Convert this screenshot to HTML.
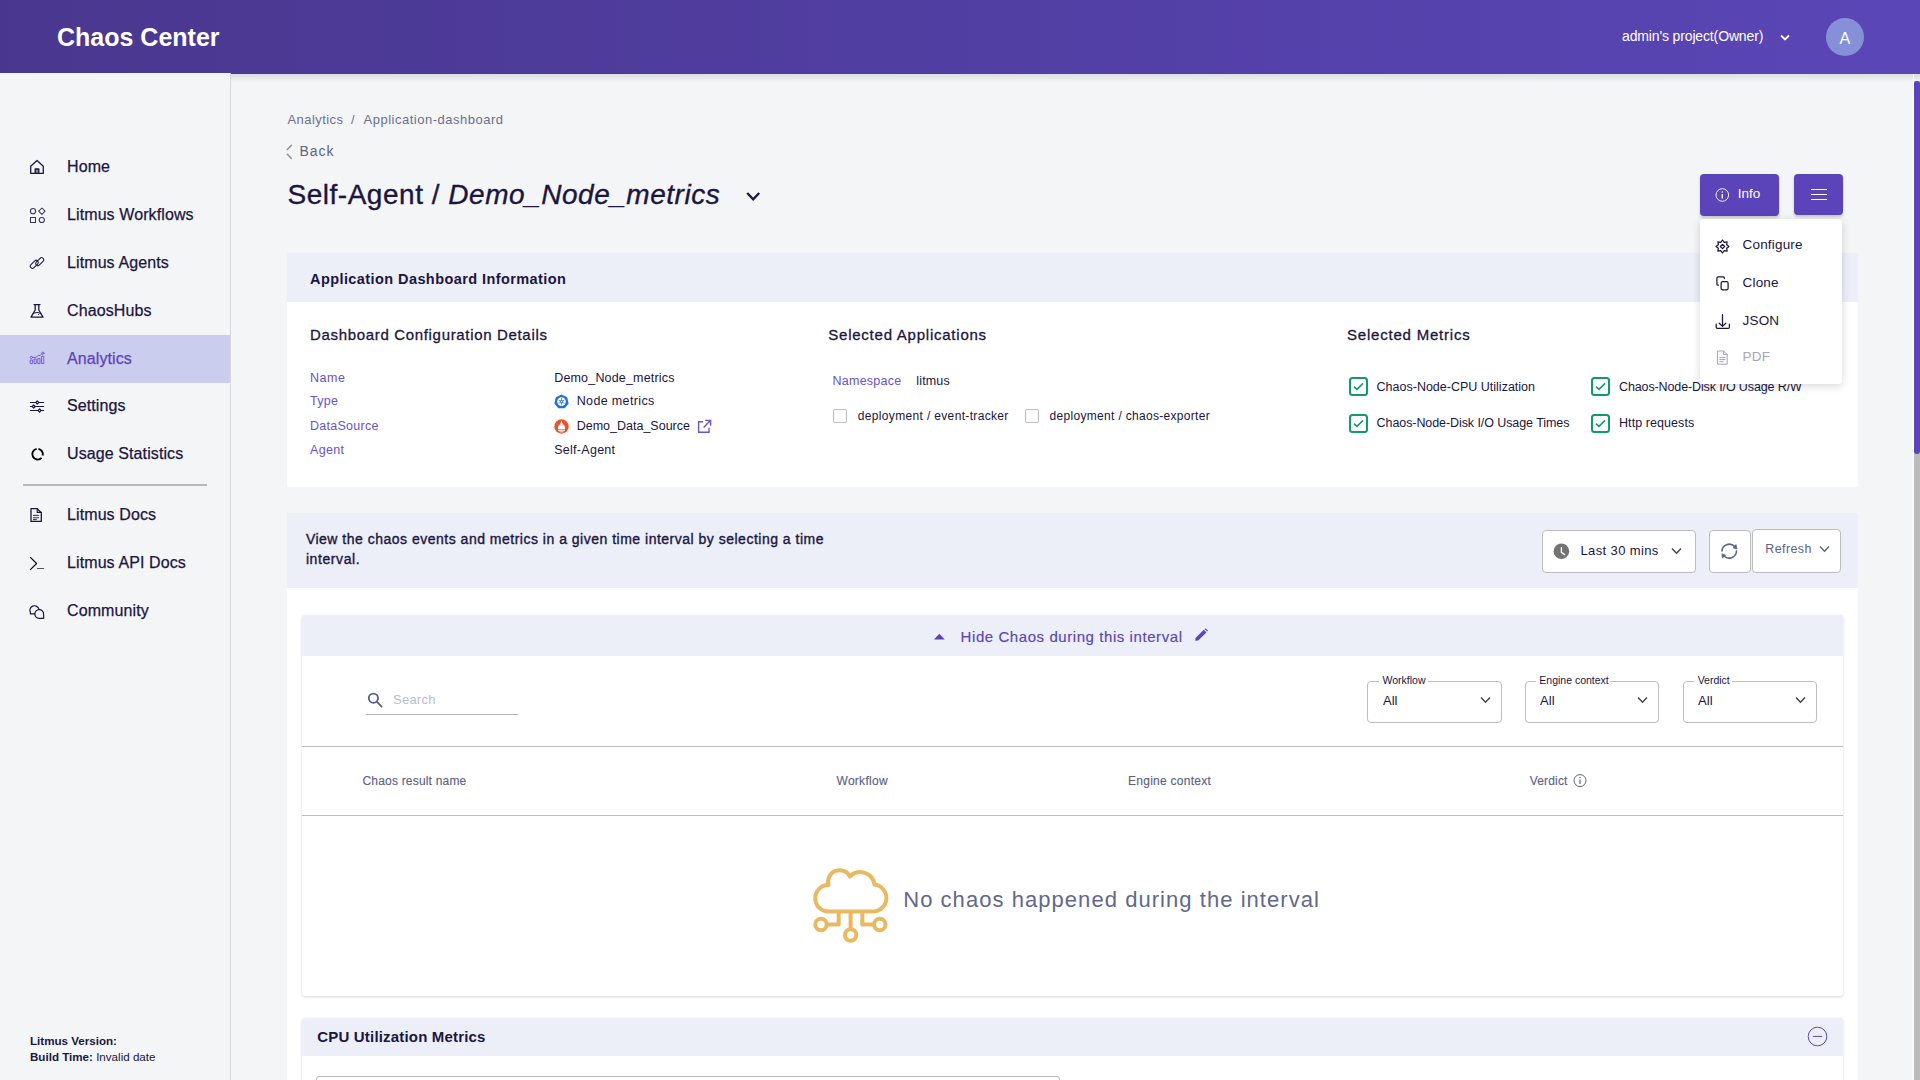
<!DOCTYPE html>
<html><head><meta charset="utf-8">
<style>
*{box-sizing:border-box;margin:0;padding:0}
html,body{width:1920px;height:1080px;overflow:hidden;background:#f4f5f7;font-family:"Liberation Sans",sans-serif;color:#1b1540}
.abs{position:absolute}
.t{position:absolute;white-space:nowrap;line-height:1}
#hdr{position:absolute;left:0;top:0;width:1920px;height:74px;background:linear-gradient(90deg,#49378f 0%,#5a46b6 100%)}
#side{position:absolute;left:0;top:73px;width:231px;height:1007px;background:#f4f5f7;border-right:1px solid #d7d8dc}
#shadow{position:absolute;left:231px;top:74px;width:1689px;height:8px;background:linear-gradient(180deg,rgba(0,0,0,0.10),rgba(0,0,0,0))}
.nav{position:absolute;left:0;width:230px;height:47px}
.nav .lbl{position:absolute;left:67px;top:16px;font-size:16px;line-height:1;white-space:nowrap;color:#1b1540}
.nl{left:67px;font-size:16px;letter-spacing:0.1px;color:#1b1540;-webkit-text-stroke:0.25px currentColor}
</style></head>
<body>
<div class="t" style="left:287.5px;top:113.0px;font-size:13.0px;color:#6b6f8e;letter-spacing:0.44px">Analytics</div>
<div class="t" style="left:351.0px;top:113.0px;font-size:13.0px;color:#6b6f8e">/</div>
<div class="t" style="left:363.5px;top:113.0px;font-size:13.0px;color:#6b6f8e;letter-spacing:0.51px">Application-dashboard</div>
<svg class="abs" style="left:282px;top:140px" width="20" height="22" viewBox="282 140 20 22"><path d="M291.4 145.2 L287.3 149.4 M287.3 154.3 L291.4 158.5" stroke="#8f8f92" stroke-width="1.5" fill="none" stroke-linecap="round"/></svg><div class="t" style="left:299.4px;top:144.1px;font-size:14.0px;color:#5d6386;letter-spacing:1.00px">Back</div>
<div class="t" style="left:287.5px;top:180.7px;font-size:28.0px;color:#1b1540;-webkit-text-stroke:0.35px #1b1540;letter-spacing:0.52px">Self-Agent / <i>Demo_Node_metrics</i></div>
<svg class="abs" style="left:744px;top:189px" width="18" height="14" viewBox="0 0 18 14"><path d="M3.2 4 L9.2 10.4 L15.2 4" stroke="#1b1540" stroke-width="2.3" fill="none"/></svg>
<div class="abs" style="left:1700.0px;top:174.0px;width:79.0px;height:42.0px;background:#5b44ba;border-radius:4px;box-shadow:0 2px 3px rgba(0,0,0,0.18)"></div>
<svg class="abs" style="left:1714px;top:187px" width="16" height="16" viewBox="0 0 16 16" fill="none" stroke="#fff" stroke-width="0.9"><circle cx="8.3" cy="8" r="6.3"/><path d="M8.3 7 V11.5" stroke-width="1.3"/><circle cx="8.3" cy="5" r="0.7" fill="#fff" stroke="none"/></svg>
<div class="t" style="left:1737.8px;top:186.6px;font-size:13.5px;color:#fff">Info</div>
<div class="abs" style="left:1794.0px;top:174.0px;width:49.0px;height:41.0px;background:#5b44ba;border-radius:4px;box-shadow:0 2px 3px rgba(0,0,0,0.18)"></div>
<div class="abs" style="left:1810.5px;top:188.5px;width:16.0px;height:1.7px;background:#fff"></div>
<div class="abs" style="left:1810.5px;top:193.8px;width:16.0px;height:1.7px;background:#fff"></div>
<div class="abs" style="left:1810.5px;top:198.8px;width:16.0px;height:1.7px;background:#fff"></div>
<div class="abs" style="left:287.0px;top:253.0px;width:1571.0px;height:234.0px;background:#fff"></div>
<div class="abs" style="left:287.0px;top:253.0px;width:1571.0px;height:49.0px;background:#eceff8"></div>
<div class="t" style="left:310.0px;top:271.5px;font-size:14.5px;font-weight:bold;color:#1b1540;letter-spacing:0.42px">Application Dashboard Information</div>
<div class="t" style="left:310.0px;top:327.3px;font-size:15.0px;color:#1b1540;-webkit-text-stroke:0.3px #1b1540;letter-spacing:0.67px">Dashboard Configuration Details</div>
<div class="t" style="left:310.0px;top:371.5px;font-size:12.5px;color:#6a52c8;letter-spacing:0.50px">Name</div>
<div class="t" style="left:310.0px;top:395.3px;font-size:12.5px;color:#6a52c8;letter-spacing:0.30px">Type</div>
<div class="t" style="left:310.0px;top:419.6px;font-size:12.5px;color:#6a52c8;letter-spacing:0.27px">DataSource</div>
<div class="t" style="left:310.0px;top:443.7px;font-size:12.5px;color:#6a52c8;letter-spacing:0.30px">Agent</div>
<div class="t" style="left:554.2px;top:371.5px;font-size:12.5px;color:#1b1540;letter-spacing:0.18px">Demo_Node_metrics</div>
<div class="t" style="left:576.7px;top:395.3px;font-size:12.5px;color:#1b1540;letter-spacing:0.36px">Node metrics</div>
<div class="t" style="left:576.7px;top:419.6px;font-size:12.5px;color:#1b1540">Demo_Data_Source</div>
<div class="t" style="left:554.2px;top:443.7px;font-size:12.5px;color:#1b1540;letter-spacing:0.28px">Self-Agent</div>
<svg class="abs" style="left:554px;top:394px" width="15" height="15" viewBox="0 0 15 15"><path d="M7.5 0.6 L13.2 3.3 L14.6 9.4 L10.7 14.3 H4.3 L0.4 9.4 L1.8 3.3 Z" fill="#1f6fe6"/><circle cx="7.5" cy="7.6" r="4.3" fill="#fff"/><path d="M7.5 4 V11.2 M4.6 6 L10.4 9.4 M10.4 6 L4.6 9.4" stroke="#1f6fe6" stroke-width="0.7"/><circle cx="7.5" cy="7.6" r="1.7" fill="#1f6fe6"/><circle cx="7.5" cy="7.6" r="0.8" fill="#fff"/></svg>
<svg class="abs" style="left:554px;top:419px" width="15" height="15" viewBox="0 0 15 15"><circle cx="7.5" cy="7.5" r="7.2" fill="#e8532d"/><path d="M4 10.2 C3.6 8 4.6 6.6 5.2 5.2 C5.6 6 5.8 6.6 6.2 6.6 C6.2 4.6 7 2.8 7.5 1.6 C8 2.8 8.8 4.6 8.8 6.6 C9.2 6.6 9.4 6 9.8 5.2 C10.4 6.6 11.4 8 11 10.2 Z" fill="#fff"/><rect x="4" y="10.9" width="7" height="0.9" fill="#fff"/><rect x="5.4" y="12.4" width="4.2" height="0.9" fill="#fff"/></svg>
<svg class="abs" style="left:697px;top:419px" width="15" height="15" viewBox="0 0 15 15" fill="none" stroke="#6a52c8" stroke-width="1.4"><path d="M6 2.8 H1.6 V13.2 H12 V8.8"/><path d="M8.2 1.4 H13.6 V6.8 M13.4 1.6 L6.6 8.4"/></svg>
<div class="t" style="left:828.3px;top:327.4px;font-size:15.0px;color:#1b1540;-webkit-text-stroke:0.3px #1b1540;letter-spacing:0.76px">Selected Applications</div>
<div class="t" style="left:832.5px;top:374.8px;font-size:12.5px;color:#6a52c8;letter-spacing:0.25px">Namespace</div>
<div class="t" style="left:916.3px;top:374.8px;font-size:12.5px;color:#1b1540;letter-spacing:0.14px">litmus</div>
<div class="abs" style="left:832.5px;top:409.0px;width:14.1px;height:14.0px;border:1.5px solid #bdbdc2;border-radius:2px"></div>
<div class="t" style="left:857.8px;top:410.3px;font-size:12.0px;color:#1b1540;letter-spacing:0.34px">deployment / event-tracker</div>
<div class="abs" style="left:1024.6px;top:409.0px;width:14.0px;height:14.0px;border:1.5px solid #bdbdc2;border-radius:2px"></div>
<div class="t" style="left:1049.6px;top:410.3px;font-size:12.0px;color:#1b1540;letter-spacing:0.31px">deployment / chaos-exporter</div>
<div class="t" style="left:1347.0px;top:327.4px;font-size:15.0px;color:#1b1540;-webkit-text-stroke:0.3px #1b1540;letter-spacing:0.79px">Selected Metrics</div>
<svg class="abs" style="left:1349.0px;top:377.0px" width="19" height="19" viewBox="0 0 19 19" fill="none"><rect x="1" y="1" width="17" height="17" rx="2.5" stroke="#109b67" stroke-width="2"/><path d="M5 9.6 L8 12.4 L14 6.4" stroke="#109b67" stroke-width="1.5"/></svg>
<div class="t" style="left:1376.6px;top:381.0px;font-size:12.5px;color:#1b1540">Chaos-Node-CPU Utilization</div>
<svg class="abs" style="left:1591.0px;top:377.0px" width="19" height="19" viewBox="0 0 19 19" fill="none"><rect x="1" y="1" width="17" height="17" rx="2.5" stroke="#109b67" stroke-width="2"/><path d="M5 9.6 L8 12.4 L14 6.4" stroke="#109b67" stroke-width="1.5"/></svg>
<div class="t" style="left:1619.0px;top:381.0px;font-size:12.5px;color:#1b1540;letter-spacing:-0.12px">Chaos-Node-Disk I/O Usage R/W</div>
<svg class="abs" style="left:1349.0px;top:413.5px" width="19" height="19" viewBox="0 0 19 19" fill="none"><rect x="1" y="1" width="17" height="17" rx="2.5" stroke="#109b67" stroke-width="2"/><path d="M5 9.6 L8 12.4 L14 6.4" stroke="#109b67" stroke-width="1.5"/></svg>
<div class="t" style="left:1376.6px;top:416.9px;font-size:12.5px;color:#1b1540;letter-spacing:-0.08px">Chaos-Node-Disk I/O Usage Times</div>
<svg class="abs" style="left:1591.0px;top:413.5px" width="19" height="19" viewBox="0 0 19 19" fill="none"><rect x="1" y="1" width="17" height="17" rx="2.5" stroke="#109b67" stroke-width="2"/><path d="M5 9.6 L8 12.4 L14 6.4" stroke="#109b67" stroke-width="1.5"/></svg>
<div class="t" style="left:1619.0px;top:416.9px;font-size:12.5px;color:#1b1540;letter-spacing:0.07px">Http requests</div>
<div class="abs" style="left:287.0px;top:513.0px;width:1571.0px;height:567.0px;background:#fff"></div>
<div class="abs" style="left:287.0px;top:513.0px;width:1571.0px;height:75.0px;background:#eceff8"></div>
<div class="t" style="left:305.9px;top:532.3px;font-size:14.0px;color:#1b1540;-webkit-text-stroke:0.35px #1b1540;letter-spacing:0.50px">View the chaos events and metrics in a given time interval by selecting a time</div>
<div class="t" style="left:305.9px;top:552.1px;font-size:14.0px;color:#1b1540;-webkit-text-stroke:0.35px #1b1540;letter-spacing:0.60px">interval.</div>
<div class="abs" style="left:1542.0px;top:530.0px;width:154.0px;height:43.0px;background:#fff;border:1px solid #bcbcbc;border-radius:4px"></div>
<svg class="abs" style="left:1550px;top:540px" width="25" height="24" viewBox="1550 540 25 24"><circle cx="1561.4" cy="551.3" r="7.8" fill="#737373"/><path d="M1561.4 547.6 V552.4 L1564.6 554.6" stroke="#fff" stroke-width="1.3" fill="none" stroke-linecap="round" stroke-linejoin="round"/></svg>
<div class="t" style="left:1580.5px;top:543.7px;font-size:13.0px;color:#1b1540;letter-spacing:0.37px">Last 30 mins</div>
<svg class="abs" style="left:1670px;top:546px" width="13" height="10" viewBox="0 0 13 10"><path d="M2 2.6 L6.5 7.2 L11 2.6" stroke="#444" stroke-width="1.5" fill="none"/></svg>
<div class="abs" style="left:1708.5px;top:530.0px;width:42.5px;height:43.0px;background:#fff;border:1px solid #bcbcbc;border-radius:4px"></div>
<svg class="abs" style="left:1715px;top:538px" width="30" height="28" viewBox="1715 538 30 28" fill="none" stroke="#5d6386" stroke-width="1.6"><path d="M1721.9 551.5 A7.4 7.4 0 0 1 1734.6 546.4"/><path d="M1736.5 550.4 A7.4 7.4 0 0 1 1724 556"/><path d="M1733 547.8 L1736 544.6 L1737 549 Z" fill="#5d6386" stroke-width="0.8" stroke-linejoin="round"/><path d="M1722 553.8 L1722.4 558 L1725.6 555.2 Z" fill="#5d6386" stroke-width="0.8" stroke-linejoin="round"/></svg>
<div class="abs" style="left:1751.5px;top:529.0px;width:89.5px;height:44.0px;background:#fff;border:1px solid #bcbcbc;border-radius:4px"></div>
<div class="t" style="left:1765.2px;top:543.2px;font-size:12.5px;color:#5d6386;letter-spacing:0.42px">Refresh</div>
<svg class="abs" style="left:1818px;top:544px" width="13" height="10" viewBox="0 0 13 10"><path d="M2 2.6 L6.5 7.2 L11 2.6" stroke="#5d6386" stroke-width="1.5" fill="none"/></svg>
<div class="abs" style="left:302.0px;top:615.0px;width:1541.0px;height:381.0px;background:#fff;border-radius:3px;box-shadow:0 1px 3px rgba(0,0,0,0.16)"></div>
<div class="abs" style="left:302.0px;top:615.0px;width:1541.0px;height:41.0px;background:#eceff8;border-radius:3px 3px 0 0"></div>
<svg class="abs" style="left:933px;top:632px" width="13" height="9" viewBox="0 0 13 9"><path d="M1 7.6 L6.4 1.8 L11.8 7.6 Z" fill="#5b44ba"/></svg>
<div class="t" style="left:960.6px;top:629.2px;font-size:15.0px;color:#5b44ba;-webkit-text-stroke:0.15px #5b44ba;letter-spacing:0.57px">Hide Chaos during this interval</div>
<svg class="abs" style="left:1194px;top:628px" width="15" height="14" viewBox="0 0 15 14"><path d="M1.2 12.8 L1.6 10 L9.8 1.8 L12.4 4.4 L4.2 12.6 Z" fill="#5b44ba"/><path d="M10.6 1 L11.6 0.2 L14 2.6 L13.2 3.6 Z" fill="#5b44ba"/></svg>
<svg class="abs" style="left:366px;top:691px" width="18" height="18" viewBox="0 0 18 18" fill="none" stroke="#5d6386" stroke-width="1.9"><circle cx="7.4" cy="7.2" r="4.6"/><path d="M10.8 10.6 L15.6 15.6" stroke-linecap="round"/></svg>
<div class="t" style="left:393.0px;top:692.9px;font-size:13.0px;color:#b9bdd0;letter-spacing:0.24px">Search</div>
<div class="abs" style="left:366.0px;top:713.5px;width:152.0px;height:1.5px;background:#b0b0b3"></div>
<div class="abs" style="left:1367.4px;top:681.0px;width:134.2px;height:42.0px;border:1px solid #bdbdc0;border-radius:4px"></div>
<div class="abs" style="left:1379.0px;top:678.0px;width:48.6px;height:6.0px;background:#fff"></div>
<div class="t" style="left:1382.5px;top:675.1px;font-size:10.5px;color:#1b1540">Workflow</div>
<div class="t" style="left:1383.0px;top:694.0px;font-size:13.0px;color:#1b1540">All</div>
<svg class="abs" style="left:1478.6px;top:695px" width="13" height="10" viewBox="0 0 13 10"><path d="M2 2.6 L6.5 7.2 L11 2.6" stroke="#444" stroke-width="1.5" fill="none"/></svg>
<div class="abs" style="left:1524.5px;top:681.0px;width:134.1px;height:42.0px;border:1px solid #bdbdc0;border-radius:4px"></div>
<div class="abs" style="left:1536.0px;top:678.0px;width:74.0px;height:6.0px;background:#fff"></div>
<div class="t" style="left:1539.3px;top:675.1px;font-size:10.5px;color:#1b1540">Engine context</div>
<div class="t" style="left:1540.1px;top:694.0px;font-size:13.0px;color:#1b1540">All</div>
<svg class="abs" style="left:1635.6px;top:695px" width="13" height="10" viewBox="0 0 13 10"><path d="M2 2.6 L6.5 7.2 L11 2.6" stroke="#444" stroke-width="1.5" fill="none"/></svg>
<div class="abs" style="left:1682.5px;top:681.0px;width:134.2px;height:42.0px;border:1px solid #bdbdc0;border-radius:4px"></div>
<div class="abs" style="left:1694.0px;top:678.0px;width:38.0px;height:6.0px;background:#fff"></div>
<div class="t" style="left:1697.7px;top:675.1px;font-size:10.5px;color:#1b1540">Verdict</div>
<div class="t" style="left:1698.1px;top:694.0px;font-size:13.0px;color:#1b1540">All</div>
<svg class="abs" style="left:1793.7px;top:695px" width="13" height="10" viewBox="0 0 13 10"><path d="M2 2.6 L6.5 7.2 L11 2.6" stroke="#444" stroke-width="1.5" fill="none"/></svg>
<div class="abs" style="left:302.0px;top:746.0px;width:1541.0px;height:1.0px;background:#bcbcbc"></div>
<div class="t" style="left:362.5px;top:775.3px;font-size:12.0px;color:#5d6386;-webkit-text-stroke:0.15px #5d6386;letter-spacing:0.19px">Chaos result name</div>
<div class="t" style="left:836.5px;top:775.3px;font-size:12.0px;color:#5d6386;-webkit-text-stroke:0.15px #5d6386;letter-spacing:0.28px">Workflow</div>
<div class="t" style="left:1128.0px;top:775.3px;font-size:12.0px;color:#5d6386;-webkit-text-stroke:0.15px #5d6386;letter-spacing:0.27px">Engine context</div>
<div class="t" style="left:1529.7px;top:775.3px;font-size:12.0px;color:#5d6386;-webkit-text-stroke:0.15px #5d6386;letter-spacing:0.17px">Verdict</div>
<svg class="abs" style="left:1573px;top:773px" width="14" height="15" viewBox="0 0 14 15" fill="none" stroke="#5d6386" stroke-width="1"><circle cx="7" cy="7.6" r="6"/><path d="M7 6.4 V11" stroke-width="1.2"/><circle cx="7" cy="4.4" r="0.7" fill="#5d6386" stroke="none"/></svg>
<div class="abs" style="left:302.0px;top:815.0px;width:1541.0px;height:1.0px;background:#bcbcbc"></div>
<svg class="abs" style="left:810px;top:866px" width="80" height="80" viewBox="0 0 80 80" fill="none" stroke="#e8b960" stroke-width="4" stroke-linejoin="round"><path d="M18.5 45.5 A13.3 13.3 0 0 1 18.5 18.9 A11.6 11.6 0 0 1 40 10.5 A14.4 14.4 0 0 1 64.5 18.6 A13.5 13.5 0 0 1 62.5 45.5 Z"/><path d="M28.7 45.5 V58.5 H16.6 M40.6 45.5 V63.2 M52.3 45.5 V58.5 H64.2"/><circle cx="11" cy="58.5" r="5.7"/><circle cx="40.6" cy="69" r="5.7"/><circle cx="69.8" cy="58.5" r="5.7"/></svg>
<div class="t" style="left:903.2px;top:888.8px;font-size:22.0px;color:#62688b;letter-spacing:1.05px">No chaos happened during the interval</div>
<div class="abs" style="left:302.0px;top:1018.0px;width:1541.0px;height:72.0px;background:#fff;border-radius:3px;box-shadow:0 1px 3px rgba(0,0,0,0.16)"></div>
<div class="abs" style="left:302.0px;top:1018.0px;width:1541.0px;height:38.0px;background:#eceff8;border-radius:3px 3px 0 0"></div>
<div class="t" style="left:317.3px;top:1028.6px;font-size:15.0px;font-weight:bold;color:#1b1540;letter-spacing:0.18px">CPU Utilization Metrics</div>
<svg class="abs" style="left:1806px;top:1025px" width="23" height="23" viewBox="0 0 23 23" fill="none" stroke="#5b44ba" stroke-width="1"><circle cx="11.5" cy="11.5" r="9.3"/><path d="M6.8 11.4 H16.2"/></svg>
<div class="abs" style="left:315.5px;top:1075.5px;width:744.5px;height:24.5px;border:1px solid #b8b8b8;border-radius:3px"></div>
<div id="hdr">
  <div class="t" style="left:57px;top:25px;font-size:25px;font-weight:bold;color:#fff">Chaos Center</div>
  <div class="t" style="left:1622px;top:28.5px;font-size:14px;color:#fff;letter-spacing:-0.14px">admin's project(Owner)</div>
  <svg class="abs" style="left:1779px;top:32.8px" width="12" height="9" viewBox="0 0 12 9"><path d="M2 2.5 L6 6.5 L10 2.5" stroke="#fff" stroke-width="1.8" fill="none"/></svg>
  <div class="abs" style="left:1826px;top:18px;width:38px;height:38px;border-radius:50%;background:#8590d9"></div>
  <div class="t" style="left:1839.5px;top:30.5px;font-size:16px;color:#fff">A</div>
</div>
<div id="side">
  <div class="abs" style="left:0;top:262px;width:230px;height:48px;background:#cbcdee"></div>
  <div class="abs" style="left:23px;top:411px;width:184px;height:2px;background:#b9b9bd"></div>
  <div class="t nl" style="top:86px">Home</div>
  <div class="t nl" style="top:134px">Litmus Workflows</div>
  <div class="t nl" style="top:182px">Litmus Agents</div>
  <div class="t nl" style="top:230px">ChaosHubs</div>
  <div class="t nl" style="top:278px;color:#5b44ba">Analytics</div>
  <div class="t nl" style="top:325px">Settings</div>
  <div class="t nl" style="top:373px">Usage Statistics</div>
  <div class="t nl" style="top:434px">Litmus Docs</div>
  <div class="t nl" style="top:482px">Litmus API Docs</div>
  <div class="t nl" style="top:530px">Community</div>
  <div class="t" style="left:30px;top:962px;font-size:11.6px;font-weight:bold">Litmus Version:</div>
  <div class="t" style="left:30px;top:978px;font-size:11.6px"><b>Build Time:</b> Invalid date</div>
</div>
<svg class="abs" style="left:0;top:0" width="230" height="1080" viewBox="0 0 230 1080" fill="none" stroke="#1b1540" stroke-width="1.3" stroke-linejoin="round" stroke-linecap="round">
  <!-- home -->
  <path d="M30.7 166.2 L37 160.5 L43.3 166.2 V173.3 H30.7 Z"/>
  <rect x="35.2" y="169" width="3.6" height="4.3" fill="#8a85a0"/>
  <!-- workflows -->
  <g stroke="#3a3550" stroke-width="1.05">
  <circle cx="33" cy="211.2" r="2.6"/>
  <path d="M41.9 208 L45.1 211.2 L41.9 214.4 L38.7 211.2 Z"/>
  <rect x="30.5" y="217.5" width="5" height="5"/>
  <circle cx="41.8" cy="220" r="2.6"/>
  </g>
  <!-- agents link -->
  <g transform="rotate(-45 37 263)" stroke-width="1.05">
    <rect x="29.4" y="259.9" width="9.4" height="4.2" rx="1.8"/>
    <rect x="35.2" y="261.9" width="9.4" height="4.2" rx="1.8"/>
  </g>
  <!-- flask -->
  <path d="M34 304.6 H40 M35.2 304.6 V310 L31 317.2 H43 L38.8 310 V304.6"/>
  <path d="M33.2 313.2 Q37 311.6 40.8 313.2" stroke-width="1"/>
  <circle cx="38.5" cy="314.5" r="0.5" fill="#1b1540" stroke="none"/>
  <!-- analytics -->
  <g stroke="#6a52c8" stroke-width="0.9">
    <rect x="30.6" y="360" width="1.8" height="3.6"/>
    <rect x="34.4" y="359" width="1.8" height="4.6"/>
    <rect x="38.2" y="358.6" width="1.8" height="5"/>
    <rect x="42" y="356.2" width="1.8" height="7.4"/>
    <circle cx="31.4" cy="357.4" r="1.1"/>
    <circle cx="42.8" cy="353.2" r="1.1"/>
    <path d="M32.5 357.4 H36 L38.2 355.5 H40 L41.8 353.8"/>
  </g>
  <!-- settings -->
  <g stroke-width="1.2">
    <path d="M30.4 402.5 H36 M38.6 402.5 H43.6 M30.4 406.5 H32.4 M35 406.5 H43.6 M30.4 410.5 H38.3 M40.9 410.5 H43.6"/>
    <path d="M37.3 400.9 L38.7 402.5 L37.3 404.1 L35.9 402.5 Z"/>
    <path d="M33.7 404.9 L35.1 406.5 L33.7 408.1 L32.3 406.5 Z"/>
    <path d="M39.6 408.9 L41 410.5 L39.6 412.1 L38.2 410.5 Z"/>
  </g>
  <!-- usage donut -->
  <path d="M36.6 448.9 A5.4 5.4 0 1 0 41.6 457.9" stroke="#000" stroke-width="1.9" stroke-linecap="butt"/>
  <path d="M38.4 448.9 A5.4 5.4 0 0 1 42.7 455.6" stroke="#000" stroke-width="1.9" stroke-linecap="butt"/>
  <!-- docs -->
  <path d="M31 508.6 H37.2 L41.3 512.8 V521.4 H31 Z"/>
  <path d="M37.2 508.6 V512.4 H41.3" stroke-width="1.1"/>
  <path d="M33.4 515.4 H38.6 M33.4 517.8 H38.6 M33.4 519.6 H36.4" stroke-width="0.9"/>
  <!-- api -->
  <path d="M30.4 557.4 L36.6 563.5 L30.4 569.6" stroke="#000" stroke-width="1.1"/>
  <path d="M37.4 568.5 H43.6" stroke="#555" stroke-width="1.2"/>
  <!-- community -->
  <path d="M38.8 608.8 A4.6 4.6 0 1 0 30.4 612.5 L30.4 613.9 L34.8 613.9" stroke-width="1.2"/>
  <path d="M43.6 618.4 L43.6 614 A4.4 4.4 0 1 0 39.3 618.4 Z" stroke-width="1.2"/>
</svg>
<div id="shadow"></div>
<div class="abs" style="left:1700.0px;top:219.0px;width:142.0px;height:165.0px;background:#fff;border-radius:4px;box-shadow:0 2px 8px rgba(0,0,0,0.16)"></div>
<div class="t" style="left:1742.5px;top:238.3px;font-size:13.5px;color:#1b1540;letter-spacing:0.19px">Configure</div>
<div class="t" style="left:1742.5px;top:275.5px;font-size:13.5px;color:#1b1540;letter-spacing:0.19px">Clone</div>
<div class="t" style="left:1742.5px;top:313.6px;font-size:13.5px;color:#1b1540;letter-spacing:0.19px">JSON</div>
<div class="t" style="left:1742.5px;top:350.3px;font-size:13.5px;color:#a9a4b8;letter-spacing:0.19px">PDF</div>
<svg class="abs" style="left:1700px;top:219px" width="142" height="165" viewBox="1700 219 142 165" fill="none" stroke="#1b1540" stroke-width="1.25" stroke-linejoin="round" stroke-linecap="round"><path d="M1722.5 244.3 L1724.7 246.5 L1722.5 248.7 L1720.3 246.5 Z" stroke-width="1.2"/><path d="M1722.50 240.00 L1724.22 242.34 L1727.10 241.90 L1726.66 244.78 L1729.00 246.50 L1726.66 248.22 L1727.10 251.10 L1724.22 250.66 L1722.50 253.00 L1720.78 250.66 L1717.90 251.10 L1718.34 248.22 L1716.00 246.50 L1718.34 244.78 L1717.90 241.90 L1720.78 242.34 Z"/><rect x="1721.1" y="281.7" width="7" height="8.2" rx="1.6"/><path d="M1718.4 285.2 H1718.2 Q1716.9 285.2 1716.9 283.9 V278.2 Q1716.9 276.9 1718.2 276.9 H1723.2 Q1724.4 276.9 1724.4 278.2 V278.6"/><path d="M1722.5 314.6 V326.2 M1719.2 323.2 L1722.5 326.4 L1725.8 323.2 M1716.2 324.2 V327.2 Q1716.2 328.4 1717.4 328.4 H1728.2 Q1729.4 328.4 1729.4 327.2 V324.2"/><path d="M1717.8 351 H1723.6 L1727.2 354.6 V364.2 H1717.8 Z M1723.6 351 V354.6 H1727.2 M1719.8 357.6 H1725 M1719.8 359.6 H1725 M1719.8 361.6 H1723" stroke="#a9a4b8" stroke-width="1"/></svg>
<div class="abs" style="left:1913px;top:74px;width:1px;height:1006px;background:#fff"></div>
<div class="abs" style="left:1914px;top:81px;width:6px;height:999px;background:#bbbbbb"></div>
<div class="abs" style="left:1914px;top:81px;width:6px;height:372.6px;background:#5b44ba;border-radius:3px"></div>
</body></html>
